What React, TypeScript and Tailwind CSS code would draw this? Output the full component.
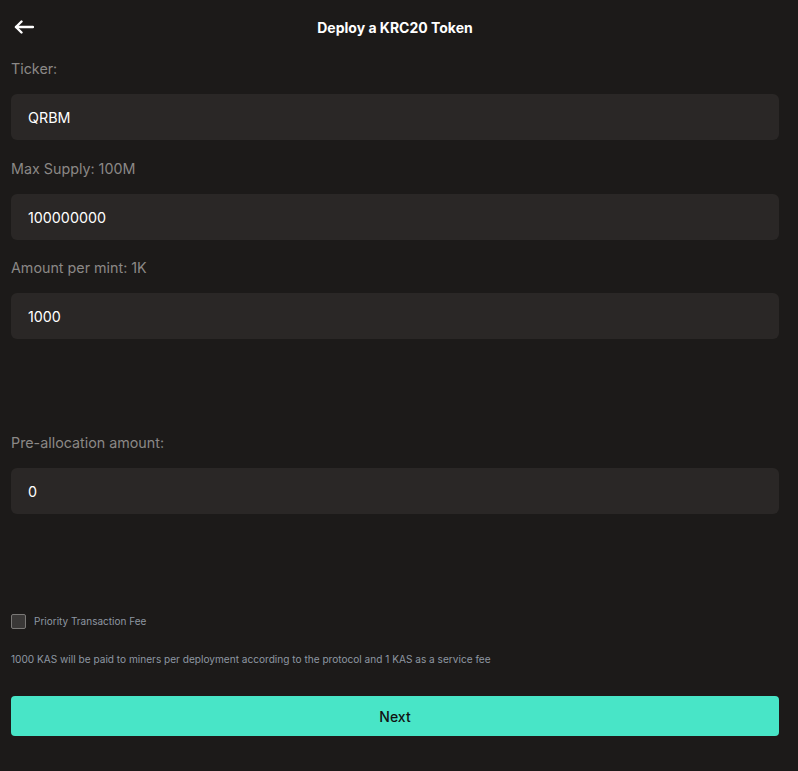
import { useState } from "react";

function Field({ label, value, className }: { label: string; value: string; className?: string }) {
  return (
    <div className={className}>
      <label className="block h-5 text-[14.3px] leading-5 text-[#8b8886]">{label}</label>
      <input
        readOnly
        value={value}
        className="mt-[15px] block h-[46px] w-full rounded-md bg-[#2a2726] px-[17px] text-[14.3px] font-normal text-white outline-none"
      />
    </div>
  );
}

export default function App() {
  const [priority, setPriority] = useState(false);

  return (
    <div
      className="min-h-[771px] w-full bg-[#1c1a19] pl-[11px] pr-[19px]"
      style={{ fontFamily: "Inter, 'Noto Sans', sans-serif" }}
    >
      <div className="relative flex h-[54px] items-center justify-center">
        <button className="absolute left-[3px] top-[20px]">
          <svg width="20" height="14" viewBox="0 0 20 14" fill="none" stroke="white" strokeWidth="2.4" strokeLinecap="round" strokeLinejoin="round">
            <path d="M19 7H2" />
            <path d="M7.5 1.5 2 7l5.5 5.5" />
          </svg>
        </button>
        <h1 className="text-[14px] font-bold text-white">Deploy a KRC20 Token</h1>
      </div>

      <Field className="mt-[5px]" label="Ticker:" value="QRBM" />
      <Field className="mt-[19px]" label="Max Supply: 100M" value="100000000" />
      <Field className="mt-[18px]" label="Amount per mint: 1K" value="1000" />
      <Field className="mt-[94px]" label="Pre-allocation amount:" value="0" />

      <label className="mt-[100px] flex cursor-pointer items-center gap-2">
        <span
          onClick={() => setPriority(!priority)}
          className="block h-[15px] w-[15px] rounded-[2px] border border-[#7a7876] bg-[#3a3837]"
        />
        <span className="text-[10px] text-[#8e97a2]">Priority Transaction Fee</span>
      </label>

      <p className="mt-[23px] text-[10.1px] leading-[14px] text-[#8e97a2]">
        1000 KAS will be paid to miners per deployment according to the protocol and 1 KAS as a service fee
      </p>

      <button className="mt-[30px] flex h-10 w-full items-center justify-center rounded bg-[#48e5c7] text-[14px] font-medium text-[#111]">
        Next
      </button>
    </div>
  );
}
